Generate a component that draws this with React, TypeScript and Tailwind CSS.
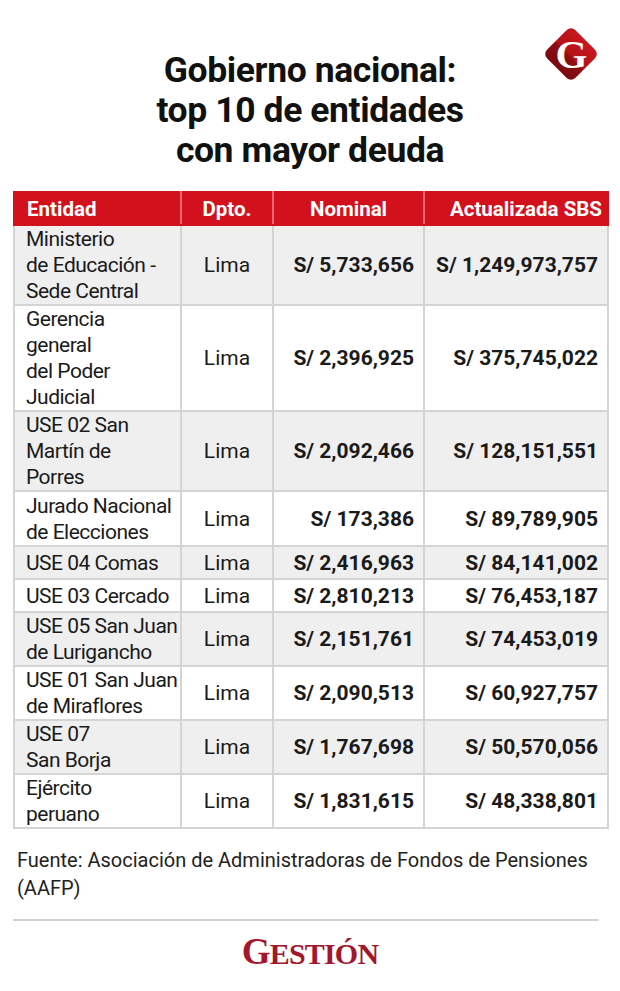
import React from "react";

type Row = { lines: string[]; nominal: string; sbs: string; h: number };

const rows: Row[] = [
  { lines: ["Ministerio", "de Educación -", "Sede Central"], nominal: "S/ 5,733,656", sbs: "S/ 1,249,973,757", h: 79 },
  { lines: ["Gerencia", "general", "del Poder", "Judicial"], nominal: "S/ 2,396,925", sbs: "S/ 375,745,022", h: 106 },
  { lines: ["USE 02 San", "Martín de", "Porres"], nominal: "S/ 2,092,466", sbs: "S/ 128,151,551", h: 80 },
  { lines: ["Jurado Nacional", "de Elecciones"], nominal: "S/ 173,386", sbs: "S/ 89,789,905", h: 55 },
  { lines: ["USE 04 Comas"], nominal: "S/ 2,416,963", sbs: "S/ 84,141,002", h: 33 },
  { lines: ["USE 03 Cercado"], nominal: "S/ 2,810,213", sbs: "S/ 76,453,187", h: 33 },
  { lines: ["USE 05 San Juan", "de Lurigancho"], nominal: "S/ 2,151,761", sbs: "S/ 74,453,019", h: 54 },
  { lines: ["USE 01 San Juan", "de Miraflores"], nominal: "S/ 2,090,513", sbs: "S/ 60,927,757", h: 53 },
  { lines: ["USE 07", "San Borja"], nominal: "S/ 1,767,698", sbs: "S/ 50,570,056", h: 54 },
  { lines: ["Ejército", "peruano"], nominal: "S/ 1,831,615", sbs: "S/ 48,338,801", h: 54 },
];

function GLogo() {
  return (
    <svg width="64" height="64" viewBox="0 0 64 64" className="absolute right-[17px] top-[22px]">
      <defs>
        <linearGradient id="gl" x1="0" y1="0" x2="0" y2="1">
          <stop offset="0" stopColor="#c8161d" />
          <stop offset="0.55" stopColor="#b31218" />
          <stop offset="0.56" stopColor="#8e0d12" />
          <stop offset="1" stopColor="#7a0a0f" />
        </linearGradient>
      </defs>
      <rect x="12" y="12" width="40" height="40" rx="6" transform="rotate(45 32 32)" fill="url(#gl)" />
      <text
        x="32.5"
        y="46"
        textAnchor="middle"
        fontFamily="'Liberation Serif', serif"
        fontWeight="700"
        fontSize="41"
        fill="#ffffff"
      >
        G
      </text>
    </svg>
  );
}

export default function App() {
  return (
    <div className="relative w-[620px] h-[991px] bg-white text-[#1a1a1a]" style={{ fontFamily: "Roboto, 'Noto Sans', sans-serif" }}>
      <GLogo />
      <h1 className="pt-[50px] text-center text-[35.5px] leading-[40px] font-bold tracking-[-0.4px] text-[#111]">
        Gobierno nacional:
        <br />
        top 10 de entidades
        <br />
        con mayor deuda
      </h1>

      <table className="mt-[21px] ml-[13px] w-[594px] border-collapse text-[21px] leading-[26px] table-fixed">
        <colgroup>
          <col className="w-[167px]" />
          <col className="w-[92px]" />
          <col className="w-[151px]" />
          <col className="w-[184px]" />
        </colgroup>
        <thead>
          <tr className="h-[33px] bg-[#d3111c] text-white font-bold text-[20.5px]">
            <th className="text-left pl-[12px] border-2 border-[#d3111c] border-r-[#e86a70]">Entidad</th>
            <th className="text-center border-2 border-[#d3111c] border-r-[#e86a70] border-l-[#e86a70]">Dpto.</th>
            <th className="text-center border-2 border-[#d3111c] border-r-[#e86a70] border-l-[#e86a70]">Nominal</th>
            <th className="text-right pr-[5px] border-2 border-[#d3111c] border-l-[#e86a70] whitespace-nowrap">Actualizada SBS</th>
          </tr>
        </thead>
        <tbody>
          {rows.map((r, i) => (
            <tr key={i} style={{ height: r.h }} className={i % 2 === 0 ? "bg-[#efefef]" : "bg-white"}>
              <td className="border-2 border-[#d4d4d4] pl-[11px] pr-0 py-0 align-middle whitespace-nowrap tracking-[-0.5px]">
                {r.lines.map((l, j) => (
                  <div key={j}>{l}</div>
                ))}
              </td>
              <td className="border-2 border-[#d4d4d4] text-center align-middle">Lima</td>
              <td className="border-2 border-[#d4d4d4] text-right pr-[9px] font-bold align-middle whitespace-nowrap">{r.nominal}</td>
              <td className="border-2 border-[#d4d4d4] text-right pr-[9px] font-bold align-middle whitespace-nowrap">{r.sbs}</td>
            </tr>
          ))}
        </tbody>
      </table>

      <p className="mt-[17px] ml-[17px] text-[20px] leading-[28px] text-[#222]">
        Fuente: Asociación de Administradoras de Fondos de Pensiones
        <br />
        (AAFP)
      </p>

      <div className="mt-[17px] ml-[13px] w-[585px] h-[2px] bg-[#d0d0d0]" />

      <div className="mt-[12px] flex justify-center">
        <div
          className="text-[#a3172c] font-bold tracking-[-0.8px] leading-none"
          style={{ fontFamily: "'Liberation Serif', serif" }}
        >
          <span className="text-[37px]">G</span>
          <span className="text-[30px]">ESTIÓN</span>
        </div>
      </div>
    </div>
  );
}
